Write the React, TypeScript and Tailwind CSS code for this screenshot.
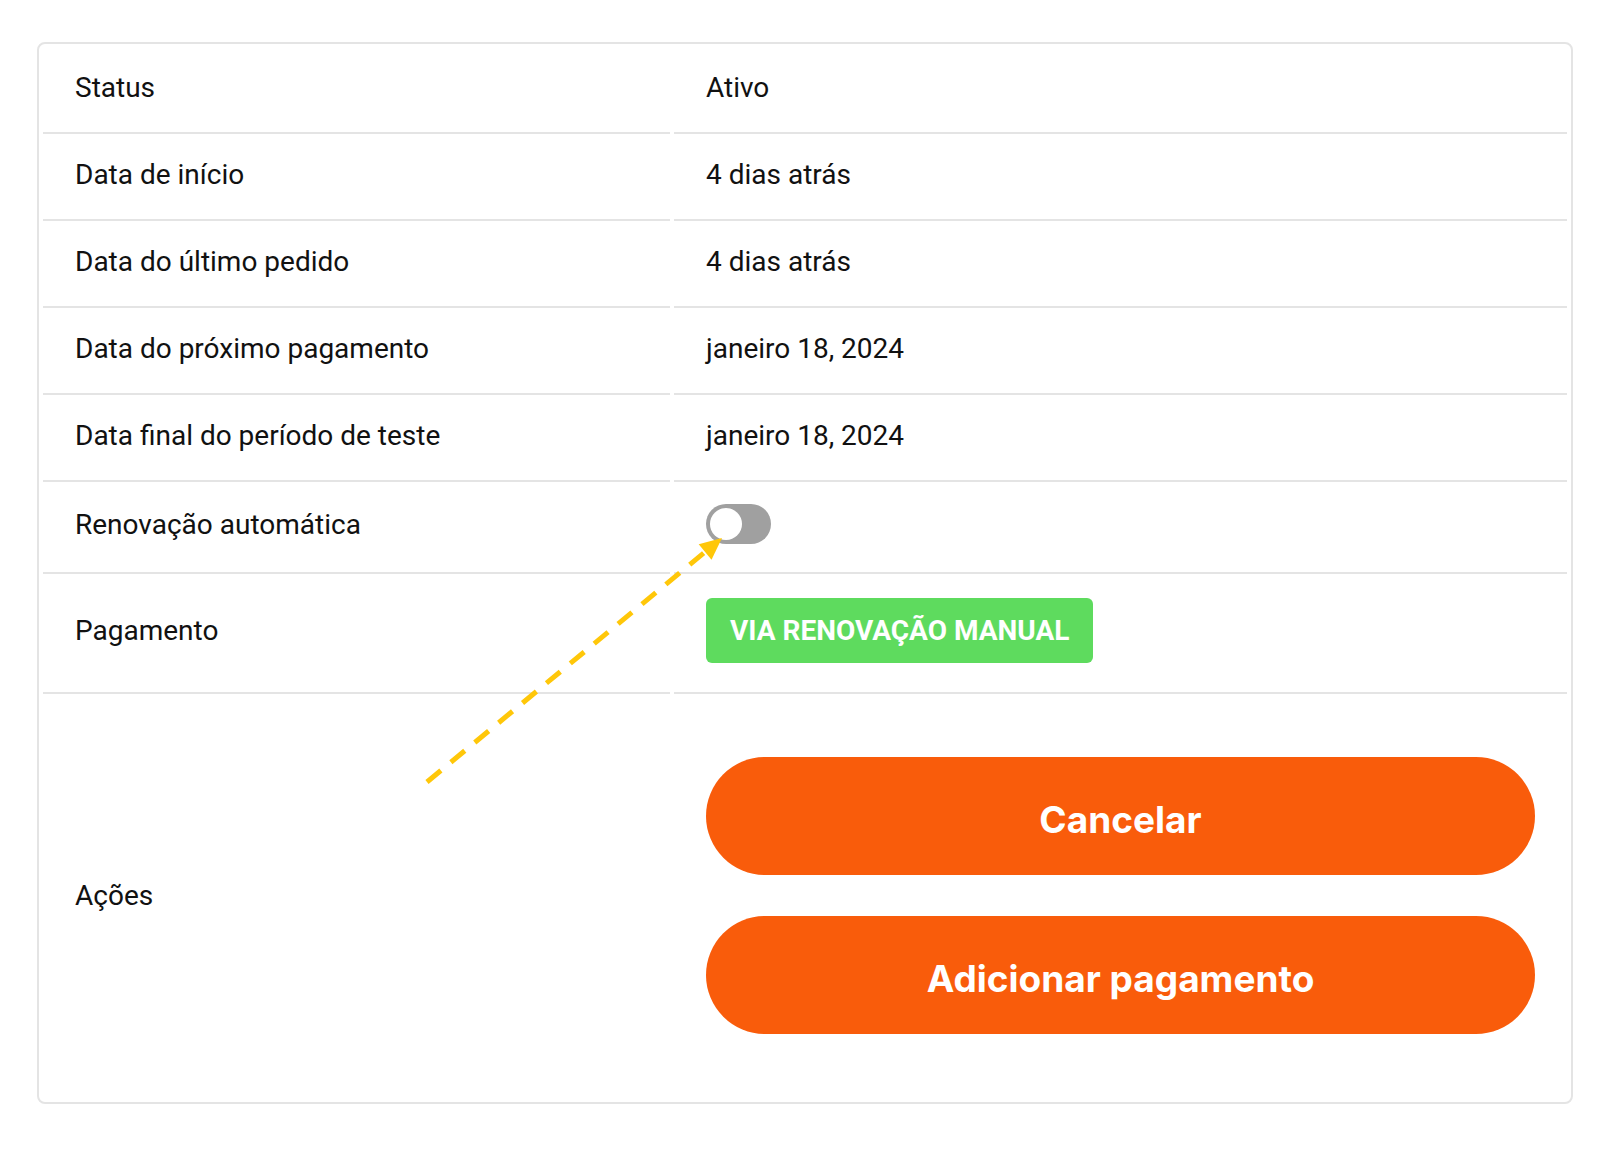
import { Fragment } from "react";

const rows = [
  ["Status", "Ativo"],
  ["Data de início", "4 dias atrás"],
  ["Data do último pedido", "4 dias atrás"],
  ["Data do próximo pagamento", "janeiro 18, 2024"],
  ["Data final do período de teste", "janeiro 18, 2024"],
];

function Toggle() {
  return (
    <div className="flex h-10 w-[65px] items-center rounded-full bg-[#a0a0a0] px-1">
      <div className="h-8 w-8 rounded-full bg-white" />
    </div>
  );
}

function Arrow() {
  // dashed pointer from the empty area up to the toggle
  return (
    <svg
      className="pointer-events-none absolute left-0 top-0"
      width="1604"
      height="1170"
      viewBox="0 0 1604 1170"
    >
      <line
        x1="427"
        y1="782"
        x2="705"
        y2="552"
        stroke="#ffc709"
        strokeWidth="5"
        strokeDasharray="18 13"
      />
      <polygon points="722,538 698.7,544.3 711.5,559.7" fill="#ffc709" />
    </svg>
  );
}

export default function App() {
  return (
    <div className="relative min-h-screen bg-white pl-[37px] pt-[42px] font-['Roboto',sans-serif] text-[28px] text-[#111]">
      <div className="w-[1536px] rounded-lg border-2 border-[#e4e4e4] px-1 pb-1 pt-[7px]">
        <div className="grid grid-cols-[627px_893px] gap-1">
          {rows.map(([label, value]) => (
            <Fragment key={label}>
              <div className="border-b-2 border-[#e4e4e4] pb-[27px] pl-8 pt-[19px] leading-[35px]">
                {label}
              </div>
              <div className="border-b-2 border-[#e4e4e4] pb-[27px] pl-8 pt-[19px] leading-[35px]">
                {value}
              </div>
            </Fragment>
          ))}

          <div className="border-b-2 border-[#e4e4e4] pb-[27px] pl-8 pt-[19px] leading-[40px]">
            Renovação automática
          </div>
          <div className="border-b-2 border-[#e4e4e4] pb-[28px] pl-8 pt-[18px]">
            <Toggle />
          </div>

          <div className="border-b-2 border-[#e4e4e4] pb-[29px] pl-8 pt-5 leading-[65px]">
            Pagamento
          </div>
          <div className="border-b-2 border-[#e4e4e4] pb-[29px] pl-8 pt-5">
            <span className="inline-flex h-[65px] items-center rounded-md bg-[#5edb5e] px-6 font-bold text-white">
              VIA RENOVAÇÃO MANUAL
            </span>
          </div>

          <div className="flex items-center pb-[64px] pl-8 pt-[59px]">Ações</div>
          <div className="flex flex-col gap-[41px] pb-[64px] pl-8 pr-8 pt-[59px]">
            <button className="h-[118px] w-full rounded-full bg-[#f95c0b] pt-2 font-['Inter',sans-serif] text-[37px] font-bold text-white">
              Cancelar
            </button>
            <button className="h-[118px] w-full rounded-full bg-[#f95c0b] pt-2 font-['Inter',sans-serif] text-[37px] font-bold text-white">
              Adicionar pagamento
            </button>
          </div>
        </div>
      </div>
      <Arrow />
    </div>
  );
}
